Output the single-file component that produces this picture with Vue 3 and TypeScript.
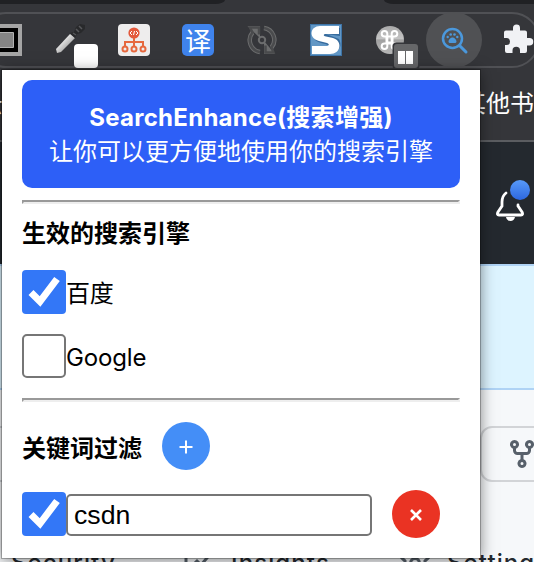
<script setup lang="ts">
import { ref } from 'vue'

interface Engine {
  name: string
  enabled: boolean
}
interface Keyword {
  text: string
  enabled: boolean
}

const engines = ref<Engine[]>([
  { name: '百度', enabled: true },
  { name: 'Google', enabled: false },
])
const keywords = ref<Keyword[]>([{ text: 'csdn', enabled: true }])

function addKeyword() {
  keywords.value.push({ text: '', enabled: true })
}
function removeKeyword(index: number) {
  keywords.value.splice(index, 1)
}
</script>

<template>
  <div class="window">
    <div class="tabs"><span class="tab left"></span><span class="tab right"></span></div>
    <div class="toolbar">
      <div class="extensions">
        <svg class="ext" viewBox="0 0 32 32">
          <path fill="#a5a5a5" d="M0 0h32v32H0z" />
          <path fill="#000" d="M0 4h28v24H0z" />
          <path fill="#858585" stroke="#b3b3b3" d="M0 8.500h23.500v15H0z" />
        </svg>
        <svg class="ext" viewBox="0 0 32 32">
          <defs>
            <linearGradient id="blade" x1="0" y1="0" x2="1" y2="1">
              <stop offset=".3" stop-color="#f0f0f0" /><stop offset=".75" stop-color="#999" />
            </linearGradient>
          </defs>
          <path fill="url(#blade)" d="M2 25 16 10l5 4L7 28l-4 1z" />
          <path fill="#28292b" d="m16 9 4-1 2-5 4-3 5 1v4l-4 4-4 1-2 4z" />
          <path d="m22 5 3 3M25 2l3 3M19 9l3 2" stroke="#57585b" stroke-width="1.500" />
          <rect x="20" y="20" width="24" height="24" rx="4" fill="#fff" />
        </svg>
        <svg class="ext" viewBox="0 0 32 32">
          <rect width="32" height="32" rx="4" fill="#eeeded" />
          <circle cx="16" cy="9" r="5.600" fill="#e3593c" />
          <path d="m14 7-2 2 2 2m4-4 2 2-2 2m-1.500-4-1 4" fill="none" stroke="#fff" />
          <g fill="none" stroke="#e6683e" stroke-width="2">
            <path d="M16 14v8M7 22v-4h18v4" />
            <circle cx="7" cy="25" r="2.500" /><circle cx="16" cy="25" r="2.500" /><circle cx="25" cy="25" r="2.500" />
          </g>
        </svg>
        <span class="ext translate">译</span>
        <svg class="ext" viewBox="0 0 32 32">
          <g fill="none" stroke="#6c6d6e" stroke-width="4.500">
            <path d="M14 28A12 12 0 0 1 6.500 8.500M18 4a12 12 0 0 1 7.500 19.500" />
            <circle cx="16" cy="16" r="3.200" stroke-width="2" />
          </g>
          <path fill="#6c6d6e" d="M1.500 2H14v12zM18 17v13h11z" />
          <path d="M14 28A12 12 0 0 1 6.500 8.500L4 3.500h9v7M18 4a12 12 0 0 1 7.500 19.500l2 5H19.500v-7" fill="none" stroke="#4a4b4d" stroke-width="2.500" />
        </svg>
        <svg class="ext" viewBox="0 0 32 32">
          <path fill="#3e75a8" d="M0 0h32v32H0z" />
          <path fill="#6297c5" d="M1 1h30v30H1z" />
          <path fill="#376b9d" d="M5 16c6 5 14 2 14 8l4 4c8-2 9-7 6-13L16 10l14 2V4L14 3z" />
          <path fill="#fff" d="M29 2v8H16c-3 0-3 2 0 2.500l7 1.500c10 3 8 16-3 16H2v-8h14c3 0 4-2 1-3L9 17C-2 14 0 2 10 2z" />
        </svg>
        <svg class="ext" viewBox="0 0 32 32">
          <defs>
            <linearGradient id="disc" x2="0" y2="1"><stop stop-color="#a9a9a9" /><stop offset=".45" stop-color="#c4c4c4" /><stop offset=".5" stop-color="#a1a1a1" /><stop offset="1" stop-color="#b8b8b8" /></linearGradient>
          </defs>
          <circle cx="16" cy="16" r="14" fill="url(#disc)" />
          <path d="M12.500 12.500h6v6h-6zm0 0h-2a2.800 2.800 0 1 1 2.800-2.800v12.600a2.800 2.800 0 1 1-2.800-2.800h10a2.800 2.800 0 1 1-2.800 2.800V9.700a2.800 2.800 0 1 1 2.800 2.800z" fill="none" stroke="#fff" stroke-width="2" />
          <rect x="18.500" y="18.500" width="27" height="27" rx="4" fill="#35363a" />
          <rect x="20" y="20" width="24" height="24" rx="3" fill="#666769" />
          <path fill="#fff" d="M24 27h7v13h-7zM32 27h7v13h-7z" />
        </svg>
        <svg class="ext" viewBox="0 0 32 32">
          <circle cx="16" cy="16" r="28" fill="#505154" />
          <circle cx="14.500" cy="14.500" r="9.500" fill="none" stroke="#4b98dc" stroke-width="2.500" />
          <path d="m22 22 6 6" stroke="#4b98dc" stroke-width="3" stroke-linecap="round" />
          <path d="M14.500 13.500c2 0 4 2.500 4 4 0 2-2 1.500-4 1.500s-4 .5-4-1.500c0-1.500 2-4 4-4z" fill="#4b98dc" />
          <g fill="#4b98dc"><circle cx="9.700" cy="13" r="1.200" /><circle cx="12.700" cy="10.500" r="1.300" /><circle cx="16.500" cy="10.500" r="1.300" /><circle cx="19.300" cy="13" r="1.200" /></g>
        </svg>
        <svg class="ext" viewBox="0 0 32 32">
          <path fill="#f1f2f5" d="M4 6.500h7V4a3.500 3.500 0 0 1 7 0v2.500h5q2 0 2 2V14h2.500a3.500 3.500 0 0 1 0 7.500H25V27q0 2-2 2h-5v-2.500a3.500 3.500 0 0 0-7.500 0V29H5q-2 0-2-2v-6h1.500a3.500 3.500 0 0 0 0-7H2V8.500q0-2 2-2z" />
        </svg>
      </div>
    </div>
    <div class="bookmarks"><span class="cut">云</span><span>其他书签</span></div>
    <div class="site-header">
      <svg width="40" height="48" viewBox="0 0 40 48">
        <defs><linearGradient id="dot" x2="0" y2="1"><stop stop-color="#589af8" /><stop offset="1" stop-color="#2d67df" /></linearGradient></defs>
        <path d="M12 15q-4 3-4 9v4l-4 6q-1.500 3 1 3h22q2.500 0 1-3l-4-6v-1" fill="none" stroke="#fff" stroke-width="2.800" stroke-linecap="round" />
        <path d="M12 39h9q-1 4-4.500 4T12 39z" fill="#fff" />
        <circle cx="26" cy="12" r="10" fill="url(#dot)" />
      </svg>
    </div>
    <div class="banner"></div>
    <div class="repo">
      <div class="stub"></div>
      <div class="fork">
        <svg width="32" height="32" viewBox="0 0 16 16" fill="#57606a"><path d="M5 5.372v.878c0 .414.336.75.75.75h4.500a.75.75 0 0 0 .75-.75v-.878a2.250 2.250 0 1 1 1.500 0v.878a2.250 2.250 0 0 1-2.250 2.250h-1.500v2.128a2.251 2.251 0 1 1-1.500 0V8.500h-1.500A2.250 2.250 0 0 1 3.500 6.250v-.878a2.250 2.250 0 1 1 1.500 0ZM5 3.250a.75.75 0 1 0-1.500 0 .75.75 0 0 0 1.500 0Zm6.750.75a.75.75 0 1 0 0-1.500.75.75 0 0 0 0 1.500Zm-3 8.750a.75.75 0 1 0-1.500 0 .75.75 0 0 0 1.500 0Z" /></svg>
      </div>
    </div>
    <nav class="repo-nav">
      <span class="security">Security</span>
      <svg class="graph" width="32" height="32" viewBox="0 0 16 16" fill="none" stroke="#57606a" stroke-width="1.500"><path d="M1.500 1v13.500H15M4 10l3-3 2 2 5.500-6.500" /></svg>
      <span class="insights">Insights</span>
      <svg class="gear" width="32" height="32" viewBox="0 0 16 16" fill="none" stroke="#57606a" stroke-width="1.500"><circle cx="8" cy="8" r="2.200" /><path d="M6.500 1h3l.5 2 1 .6 2-.7 1.500 2.700-1.500 1.400v2l1.500 1.400-1.500 2.700-2-.7-1 .6-.5 2h-3l-.5-2-1-.6-2 .7L1.500 10.400 3 9V7L1.500 5.600 3 2.900l2 .7 1-.6z" /></svg>
      <span>Settings</span>
    </nav>

    <main class="popup">
      <header class="title">
        <strong>SearchEnhance(搜索增强)</strong>
        <span>让你可以更方便地使用你的搜索引擎</span>
      </header>
      <hr />
      <h2>生效的搜索引擎</h2>
      <label v-for="engine in engines" :key="engine.name" class="engine">
        <input v-model="engine.enabled" class="native" type="checkbox" />
        <span class="check" :class="{ on: engine.enabled }">
          <svg v-if="engine.enabled" viewBox="0 0 44 44"><path d="m9 22.500 9 9L35 9" /></svg>
        </span>
        <span class="name">{{ engine.name }}</span>
      </label>
      <hr class="second" />
      <div class="filter-head">
        <h2>关键词过滤</h2>
        <button class="round add" @click="addKeyword">
          <svg viewBox="0 0 48 48"><path d="M24 18.500v13M17.500 25h13" /></svg>
        </button>
      </div>
      <div v-for="(keyword, index) in keywords" :key="index" class="keyword">
        <label>
          <input v-model="keyword.enabled" class="native" type="checkbox" />
          <span class="check" :class="{ on: keyword.enabled }">
            <svg v-if="keyword.enabled" viewBox="0 0 44 44"><path d="m9 22.500 9 9L35 9" /></svg>
          </span>
        </label>
        <input v-model="keyword.text" class="text" type="text" />
        <button class="round remove" @click="removeKeyword(index)">
          <svg viewBox="0 0 48 48"><path d="m19 20 10 10M29 20 19 30" /></svg>
        </button>
      </div>
    </main>
  </div>
</template>

<style>
body {
  overflow: hidden;
}
</style>

<style scoped>
* {
  box-sizing: border-box;
}
.window {
  position: relative;
  width: 534px;
  height: 562px;
  overflow: hidden;
  background: #f6f8fa;
  font-family: Inter, 'Noto Sans CJK SC', sans-serif;
  font-size: 24px;
}
.tabs {
  height: 12px;
  display: flex;
  justify-content: space-between;
  align-items: flex-start;
  background: #35363a;
}
.tab {
  height: 4px;
  background: #202124;
}
.left {
  width: 225px;
  border-bottom-right-radius: 10px 4px;
}
.right {
  width: 150px;
  border-bottom-left-radius: 10px 4px;
}
.toolbar {
  height: 58px;
  background: #35363a;
}
.extensions {
  width: 562px;
  height: 56px;
  margin-left: -22px;
  padding-left: 10px;
  display: flex;
  align-items: center;
  gap: 32px;
  border: 2px solid #505155;
  border-radius: 28px;
}
.ext {
  width: 32px;
  height: 32px;
  flex: none;
  overflow: visible;
}
.translate {
  display: flex;
  align-items: center;
  justify-content: center;
  border-radius: 5px;
  background: #3f83ec;
  color: #fff;
  font: 400 26px/32px 'Noto Sans CJK SC', sans-serif;
}
.bookmarks {
  height: 72px;
  display: flex;
  align-items: flex-start;
  padding-top: 16px;
  border-bottom: 2px solid #5b5d61;
  background: #35363a;
  color: #fff;
  line-height: 36px;
  white-space: nowrap;
}
.cut {
  flex: none;
  width: 462px;
  text-indent: -21px;
}
.site-header {
  height: 122px;
  padding: 36px 0 0 494px;
  background: #24292f;
}
.banner {
  height: 126px;
  border: solid #afd3f5;
  border-width: 2px 0;
  background: #ddf4ff;
}
.repo {
  height: 93px;
  padding-top: 36px;
  display: flex;
  gap: 380px;
}
.stub {
  flex: none;
  width: 100px;
  height: 56px;
  border: 2px solid #d0d4d8;
  border-left: 0;
}
.fork {
  flex: none;
  width: 100px;
  height: 56px;
  padding: 10px 0 0 24px;
  border: 2px solid #d2d4d7;
  border-radius: 12px;
}
.repo-nav {
  display: flex;
  align-items: center;
  height: 78px;
  padding: 80px 0 0 11px;
  color: #24292f;
  font-weight: 500;
  line-height: 32px;
  letter-spacing: 1.1px;
}
.repo-nav > * {
  flex: none;
}
.security {
  width: 172px;
}
.graph {
  margin-right: 16px;
}
.insights {
  width: 168px;
}
.gear {
  margin-right: 16px;
}
.popup {
  position: absolute;
  left: 2px;
  top: 70px;
  width: 478px;
  height: 488px;
  padding: 10px 20px;
  background: #fff;
  box-shadow: 0 0 0 1px rgba(0, 0, 0, 0.25), 0 2px 14px rgba(0, 0, 0, 0.5);
  color: #000;
}
.title {
  height: 108px;
  padding-top: 21px;
  display: flex;
  flex-direction: column;
  align-items: center;
  border-radius: 10px;
  background: #2d5ff7;
  color: #fff;
  line-height: 34px;
  white-space: nowrap;
}
.title strong {
  letter-spacing: 0.28px;
}
hr {
  height: 4px;
  margin: 12px 0 0;
  border: 2px solid;
  border-color: #999 #eee #eee #999;
}
h2 {
  margin: 0;
  font-size: 24px;
  line-height: 34px;
}
hr + h2 {
  margin: 13px 0 19px;
}
.engine {
  display: flex;
  align-items: center;
  height: 44px;
  margin-bottom: 20px;
}
.native {
  display: none;
}
.check {
  flex: none;
  display: block;
  width: 44px;
  height: 44px;
  border: 2px solid #767676;
  border-radius: 5px;
}
.check.on {
  border: 0;
  border-radius: 4px;
  background: #3377f7;
}
.check svg {
  display: block;
  fill: none;
  stroke: #fff;
  stroke-width: 7;
}
.name {
  line-height: 34px;
  padding-top: 3px;
  letter-spacing: -0.15px;
}
.second {
  margin-top: 0;
}
.filter-head {
  display: flex;
  align-items: center;
  gap: 20px;
  height: 48px;
  margin: 20px 0;
}
.filter-head h2 {
  padding-top: 5px;
}
.round {
  width: 48px;
  height: 48px;
  padding: 0;
  border: 0;
  border-radius: 50%;
}
.round svg {
  display: block;
  fill: none;
  stroke: #fff;
}
.add {
  background: #448ef7;
  stroke-width: 2;
}
.remove {
  margin-left: 20px;
  background: #ea3323;
  stroke-width: 2.6;
}
.keyword {
  display: flex;
  align-items: center;
}
.text {
  width: 306px;
  height: 42px;
  margin: 2px 0 0;
  padding: 0 6px;
  border: 2px solid #767676;
  border-radius: 5px;
  outline: 0;
  background: #fff;
  font: 26.67px 'Liberation Sans', sans-serif;
}
</style>
